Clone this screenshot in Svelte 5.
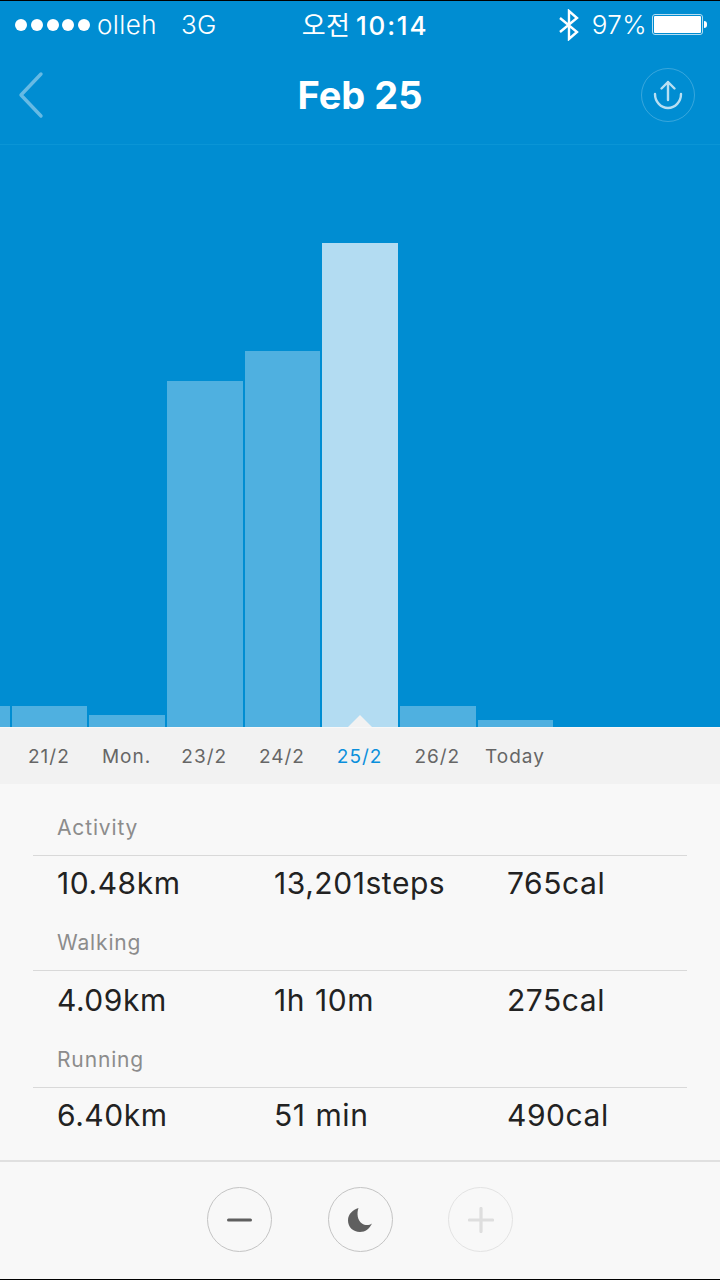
<script>
	const bars = [
		{ h: 21 },
		{ h: 21 },
		{ h: 12 },
		{ h: 346 },
		{ h: 376 },
		{ h: 484, active: true },
		{ h: 21 },
		{ h: 7 }
	];

	const days = ['21/2', 'Mon.', '23/2', '24/2', '25/2', '26/2', 'Today'];

	const sections = [
		{ title: 'Activity', values: ['10.48km', '13,201steps', '765cal'] },
		{ title: 'Walking', values: ['4.09km', '1h 10m', '275cal'] },
		{ title: 'Running', values: ['6.40km', '51 min', '490cal'] }
	];
</script>

<div class="page">
	<div class="top">
		<div class="status">
			<div class="carrier">
				<span class="dots">
					{#each [1, 2, 3, 4, 5] as d (d)}
						<i></i>
					{/each}
				</span>
				<span>olleh</span>
				<span class="net">3G</span>
			</div>
			<div class="clock"><span class="ampm">오전</span> <span class="time">10:14</span></div>
			<div class="right">
				<svg width="22" height="32" viewBox="0 0 22 32" fill="none" stroke="#fff" stroke-width="2.4">
					<path d="M2 9 L19 23 L11 30 V2 L19 9 L2 23" />
				</svg>
				<span class="pct">97%</span>
				<span class="battery"><b></b></span>
				<span class="nub"></span>
			</div>
		</div>
		<div class="head">
			<svg class="back" width="28" height="48" viewBox="0 0 28 48" fill="none">
				<path d="M24 3 L4 24 L24 45" stroke="#fff" stroke-opacity="0.4" stroke-width="3.4" stroke-linecap="round" stroke-linejoin="round" />
			</svg>
			<h1>Feb 25</h1>
			<div class="share">
				<svg width="32" height="30" viewBox="0 0 32 30" fill="none" stroke="#fff" stroke-opacity="0.72" stroke-width="2.4" stroke-linecap="round" stroke-linejoin="round">
					<path d="M3 14 A13 14 0 0 0 29 14" />
					<path d="M16 20 V2 M9.5 8.5 L16 2 L22.5 8.5" />
				</svg>
			</div>
		</div>
	</div>

	<div class="chart">
		{#each bars as bar, i (i)}
			<div class="bar" class:active={bar.active} style="height: {bar.h}px"></div>
		{/each}
		<span class="pointer"></span>
	</div>

	<div class="days">
		{#each days as day, i (day)}
			<span class:current={i === 4}>{day}</span>
		{/each}
	</div>

	<div class="stats">
		{#each sections as section (section.title)}
			<div class="section">
				<div class="title">{section.title}</div>
				<div class="values">
					{#each section.values as value (value)}
						<span>{value}</span>
					{/each}
				</div>
			</div>
		{/each}
	</div>

	<div class="footer">
		<div class="btn">
			<svg width="26" height="4" viewBox="0 0 26 4"><rect y="0.5" width="25" height="3" rx="1.5" fill="#5f5f5f" /></svg>
		</div>
		<div class="btn">
			<svg width="26" height="26" viewBox="0 0 26 26">
				<path d="M11.5 1 C6 3 1 6.5 1 13.5 C1 20 6 25 13 25 C18.5 25 22.5 21.5 25 16.5 C22 18.5 18 18.5 15 16.5 C10.5 13.5 9.5 6.5 11.5 1 Z" fill="#5f5f5f" />
			</svg>
		</div>
		<div class="btn light">
			<svg width="26" height="26" viewBox="0 0 26 26" fill="none" stroke="#dedede" stroke-width="3.2" stroke-linecap="round">
				<path d="M1.5 13 H24.5 M13 1.5 V24.5" />
			</svg>
		</div>
	</div>
</div>

<style>
	:global(body) {
		margin: 0;
		background: #000;
	}

	.page {
		width: 720px;
		height: 1280px;
		box-sizing: border-box;
		padding: 1px 0;
		display: flex;
		flex-direction: column;
		font-family: Inter, 'Noto Sans CJK KR', sans-serif;
		overflow: hidden;
	}

	.top {
		height: 144px;
		flex: none;
		box-sizing: border-box;
		background: #008dd2;
		border-bottom: 1px solid #0a95d6;
		color: #fff;
		display: flex;
		flex-direction: column;
	}

	.status {
		height: 47px;
		padding: 0 15px;
		display: grid;
		grid-template-columns: 1fr auto 1fr;
		align-items: center;
		font-size: 26px;
		letter-spacing: 0.4px;
		font-weight: 300;
	}

	.carrier {
		display: flex;
		align-items: center;
		gap: 7px;
	}

	.dots {
		display: flex;
		gap: 3.75px;
	}

	.dots i {
		width: 12px;
		height: 12px;
		border-radius: 50%;
		background: #fff;
	}

	.net {
		margin-left: 17px;
	}

	.clock {
		margin: -3px 0 0 10px;
	}

	.ampm {
		font-weight: 400;
		margin-right: -2px;
	}

	.time {
		font-weight: 500;
		letter-spacing: 1.8px;
	}

	.right {
		display: flex;
		align-items: center;
		justify-content: flex-end;
		margin-right: -2px;
	}

	.pct {
		margin-left: 12px;
		margin-right: 5px;
	}

	.battery {
		width: 51px;
		height: 21px;
		box-sizing: border-box;
		border: 1px solid #b5def2;
		border-radius: 3px;
		padding: 1px;
		display: flex;
	}

	.battery b {
		flex: 1;
		background: #fff;
		border-radius: 1px;
	}

	.nub {
		width: 3px;
		height: 7px;
		margin-left: 1px;
		background: #fff;
		border-radius: 0 3px 3px 0;
	}

	.head {
		flex: 1;
		position: relative;
		display: flex;
		align-items: center;
		justify-content: space-between;
		padding: 0 25px 3px 17px;
	}

	h1 {
		position: absolute;
		left: 0;
		right: 0;
		margin: 0;
		text-align: center;
		font-size: 38px;
		font-weight: 700;
	}

	.share {
		width: 54px;
		height: 54px;
		box-sizing: border-box;
		border: 1px solid rgba(255, 255, 255, 0.22);
		border-radius: 50%;
		display: flex;
		align-items: center;
		justify-content: center;
	}

	.chart {
		position: relative;
		height: 583px;
		flex: none;
		box-sizing: border-box;
		background: #008dd2;
		display: flex;
		align-items: flex-end;
		gap: 2.1px;
		margin-left: -66px;
		border-bottom: 1px solid #f8f8f8;
	}

	.bar {
		width: 75.6px;
		flex: none;
		background: rgba(255, 255, 255, 0.31);
	}

	.bar.active {
		background: #b3dcf2;
	}

	.pointer {
		position: absolute;
		left: 414px;
		bottom: 0;
		width: 0;
		height: 0;
		border-left: 12px solid transparent;
		border-right: 12px solid transparent;
		border-bottom: 12px solid #f2f2f2;
	}

	.days {
		height: 56px;
		flex: none;
		background: #f2f2f2;
		display: flex;
		align-items: center;
		padding-left: 10px;
		font-size: 19px;
		letter-spacing: 1px;
		color: #666;
	}

	.days span {
		width: 77.7px;
		text-align: center;
	}

	.days .current {
		color: #0a8fdc;
	}

	.stats {
		flex: 1;
		background: #f8f8f8;
		padding: 28px 33px 0;
		display: flex;
		flex-direction: column;
	}

	.section {
		height: 116px;
		flex: none;
	}

	.section:nth-child(1) {
		height: 115px;
	}

	.section:nth-child(2) {
		height: 117px;
	}

	.section:nth-child(2) .values {
		padding-top: 11px;
	}

	.title {
		padding: 1px 0 12px 24px;
		font-size: 21px;
		letter-spacing: 0.85px;
		line-height: 30px;
		color: #8c8c8c;
		border-bottom: 1px solid #d9d9d9;
		height: 30px;
	}

	.values {
		display: grid;
		grid-template-columns: 217px 233px auto;
		padding: 9px 0 0 24px;
		font-size: 30px;
		letter-spacing: 0.55px;
		word-spacing: 1px;
		line-height: 36px;
		color: #222;
	}

	.footer {
		height: 119px;
		flex: none;
		box-sizing: border-box;
		background: #f8f8f8;
		border-top: 2px solid #e0e0e0;
		padding-bottom: 2px;
		display: flex;
		align-items: center;
		justify-content: center;
		gap: 55.5px;
	}

	.btn {
		width: 65px;
		height: 65px;
		box-sizing: border-box;
		border: 1.5px solid #c4c4c4;
		border-radius: 50%;
		display: flex;
		align-items: center;
		justify-content: center;
	}

	.btn.light {
		border-color: #e3e3e3;
	}
</style>
